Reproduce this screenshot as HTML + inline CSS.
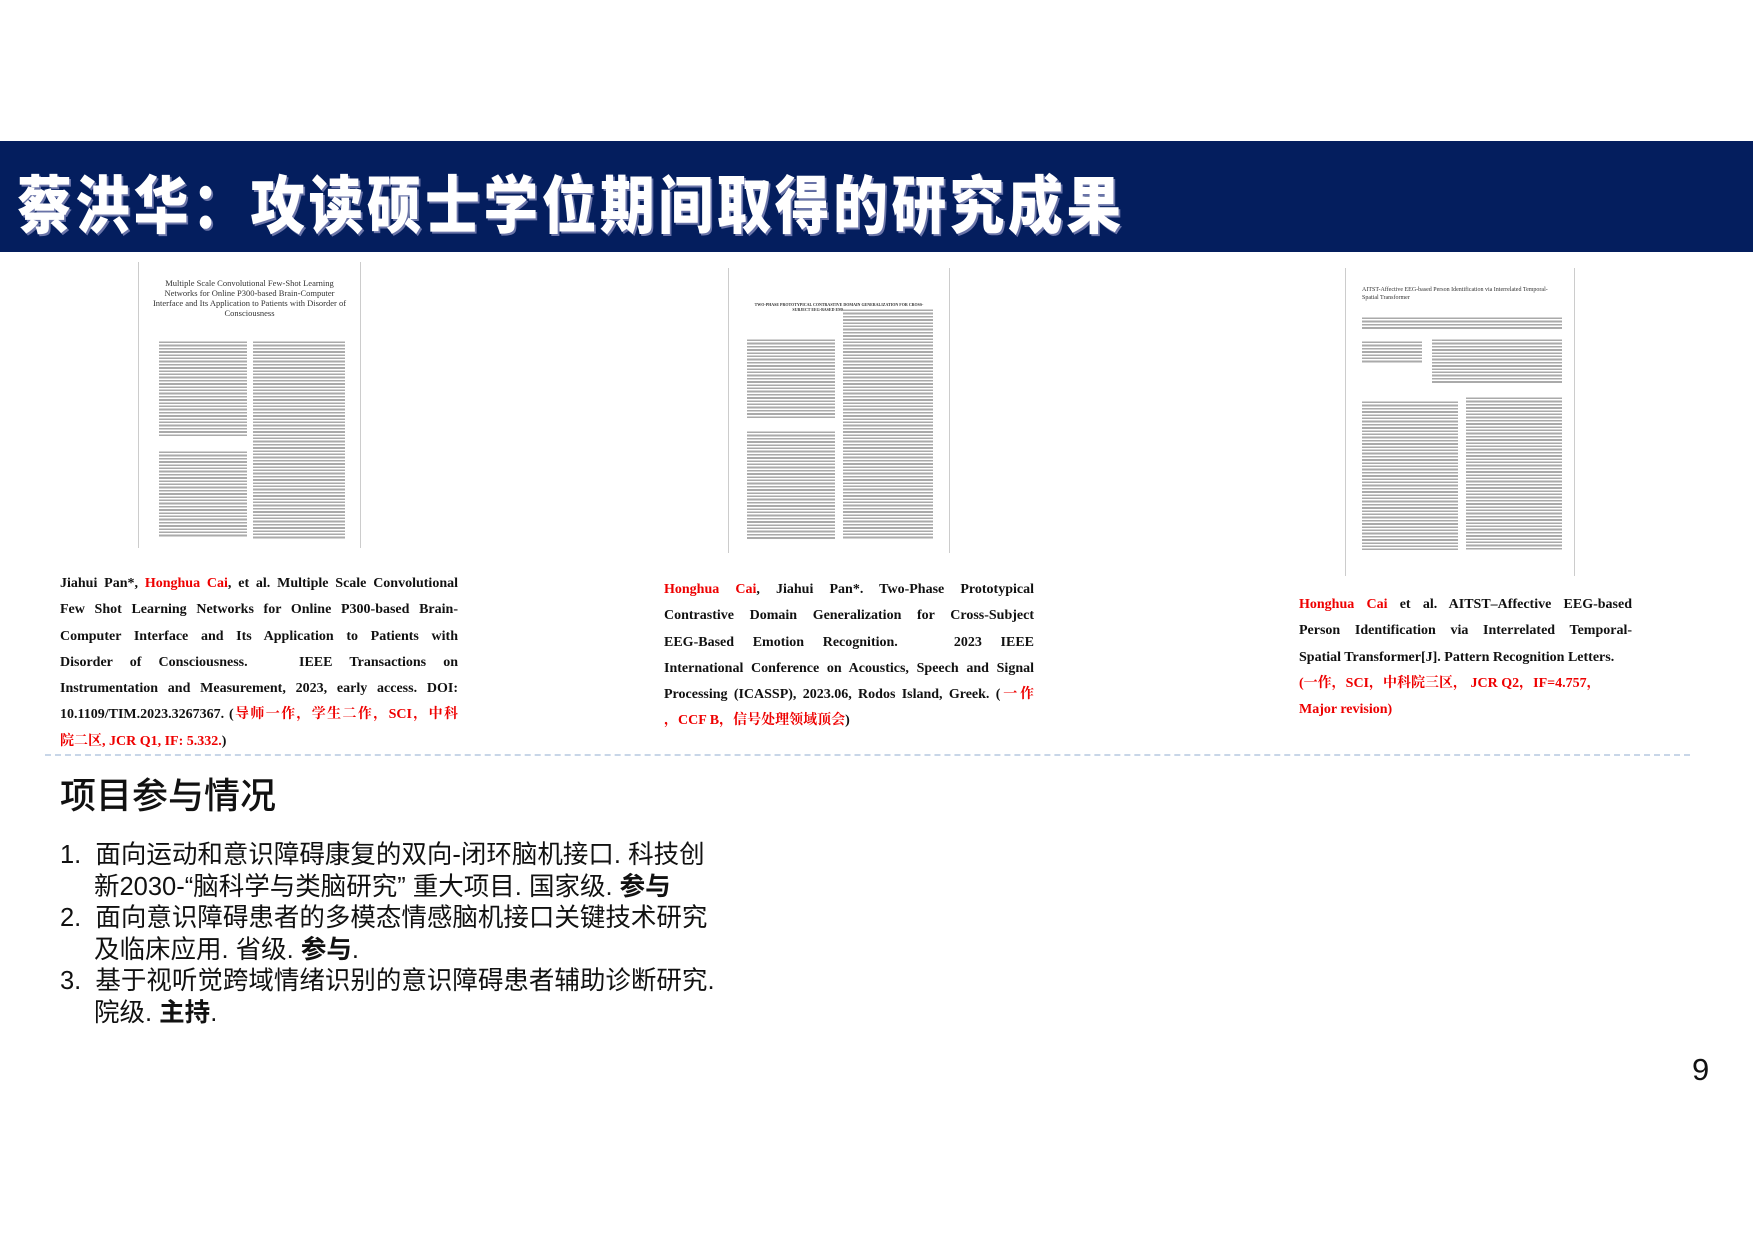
<!DOCTYPE html>
<html><head><meta charset="utf-8"><style>
*{margin:0;padding:0;box-sizing:border-box}
body{width:1753px;height:1238px;background:#fff;position:relative;overflow:hidden;font-family:"Liberation Sans","Noto Sans CJK SC",sans-serif}
.bar{position:absolute;left:0;top:141px;width:1753px;height:111px;background:#041e5e}
.title{position:absolute;left:17px;top:156px;font-size:63px;font-weight:900;color:#fff;letter-spacing:4px;white-space:nowrap;font-family:"Noto Sans CJK SC",sans-serif;text-shadow:2px 2px 0 #6a74a8;transform:scaleX(0.87);transform-origin:left top}
.paper{position:absolute;background:#fff;border-left:1px solid #ccc;border-right:1px solid #ccc;overflow:hidden}
.pt{font-family:"Liberation Serif",serif;color:#333;text-align:center}
.col{position:absolute;background:repeating-linear-gradient(#fff 0,#fff 1.5px,#aaa 1.5px,#aaa 3.2px)}
.cap{position:absolute;font-family:"Liberation Serif","Noto Serif CJK SC",serif;font-weight:bold;font-size:14px;line-height:26.3px;color:#111}
.cap div{text-align:justify;text-align-last:justify;white-space:nowrap}
.cap div.l{text-align-last:left}
.r{color:#e00}
.dash{position:absolute;left:45px;top:754px;width:1645px;border-top:2px dashed #c8d6e8}
.h2{position:absolute;left:60px;top:767px;font-size:36px;color:#111;font-family:"Noto Sans CJK SC",sans-serif;font-weight:500}
.list{position:absolute;left:60px;top:840px;font-size:25.5px;line-height:31.5px;color:#111;font-family:"Liberation Sans","Noto Sans CJK SC",sans-serif}
.li{padding-left:34px;text-indent:-34px}
.li b{font-weight:bold}
.pg{position:absolute;left:1692px;top:1052px;font-size:31px;color:#111}
</style></head><body>
<div class="bar"></div>
<div class="title">蔡洪华：攻读硕士学位期间取得的研究成果</div>

<div class="paper" style="left:138px;top:262px;width:223px;height:286px">
<div class="pt" style="font-size:8.5px;line-height:10px;margin:16px 12px 0">Multiple Scale Convolutional Few-Shot Learning Networks for Online P300-based Brain-Computer Interface and Its Application to Patients with Disorder of Consciousness</div>
<div class="col" style="left:20px;top:78px;width:88px;height:96px"></div>
<div class="col" style="left:20px;top:188px;width:88px;height:88px"></div>
<div class="col" style="left:114px;top:78px;width:92px;height:200px"></div>
</div>
<div class="paper" style="left:728px;top:268px;width:222px;height:285px">
<div class="pt" style="font-size:4px;line-height:5px;margin:34px 20px 0;font-weight:bold">TWO-PHASE PROTOTYPICAL CONTRASTIVE DOMAIN GENERALIZATION FOR CROSS-SUBJECT EEG-BASED EMOTION RECOGNITION</div>
<div class="col" style="left:18px;top:70px;width:88px;height:80px"></div>
<div class="col" style="left:18px;top:162px;width:88px;height:110px"></div>
<div class="col" style="left:114px;top:40px;width:90px;height:232px"></div>
</div>
<div class="paper" style="left:1345px;top:268px;width:230px;height:308px">
<div class="pt" style="font-size:6px;line-height:8px;margin:18px 16px 0;text-align:left">AITST-Affective EEG-based Person Identification via Interrelated Temporal-Spatial Transformer</div>
<div class="col" style="left:16px;top:48px;width:200px;height:14px"></div>
<div class="col" style="left:16px;top:72px;width:60px;height:24px"></div>
<div class="col" style="left:86px;top:70px;width:130px;height:46px"></div>
<div class="col" style="left:16px;top:132px;width:96px;height:150px"></div>
<div class="col" style="left:120px;top:128px;width:96px;height:154px"></div>
</div>

<div class="cap" style="left:60px;top:571px;width:398px">
<div>Jiahui Pan*, <span class="r">Honghua Cai</span>, et al. Multiple Scale Convolutional</div>
<div>Few Shot Learning Networks for Online P300-based Brain-</div>
<div>Computer Interface and Its Application to Patients with</div>
<div>Disorder of Consciousness. &nbsp; IEEE Transactions on</div>
<div>Instrumentation and Measurement, 2023, early access. DOI:</div>
<div>10.1109/TIM.2023.3267367. (<span class="r">导师一作，学生二作，SCI，中科</span></div>
<div class="l"><span class="r">院二区, JCR Q1, IF: 5.332.</span>)</div>
</div>
<div class="cap" style="left:664px;top:577px;width:370px">
<div><span class="r">Honghua Cai</span>, Jiahui Pan*. Two-Phase Prototypical</div>
<div>Contrastive Domain Generalization for Cross-Subject</div>
<div>EEG-Based Emotion Recognition. &nbsp; 2023 IEEE</div>
<div>International Conference on Acoustics, Speech and Signal</div>
<div>Processing (ICASSP), 2023.06, Rodos Island, Greek. (<span class="r">一作</span></div>
<div class="l"><span class="r">，CCF B，信号处理领域顶会</span>)</div>
</div>
<div class="cap" style="left:1299px;top:592px;width:333px">
<div><span class="r">Honghua Cai</span> et al. AITST–Affective EEG-based</div>
<div>Person Identification via Interrelated Temporal-</div>
<div class="l">Spatial Transformer[J]. Pattern Recognition Letters.</div>
<div class="l"><span class="r">(一作，SCI，中科院三区， JCR Q2，IF=4.757，</span></div>
<div class="l"><span class="r">Major revision)</span></div>
</div>

<div class="dash"></div>
<div class="h2">项目参与情况</div>
<div class="list">
<div class="li">1.&nbsp; 面向运动和意识障碍康复的双向-闭环脑机接口. 科技创<br>新2030-“脑科学与类脑研究” 重大项目. 国家级. <b>参与</b></div>
<div class="li">2.&nbsp; 面向意识障碍患者的多模态情感脑机接口关键技术研究<br>及临床应用. 省级. <b>参与</b>.</div>
<div class="li">3.&nbsp; 基于视听觉跨域情绪识别的意识障碍患者辅助诊断研究.<br>院级. <b>主持</b>.</div>
</div>
<div class="pg">9</div>
</body></html>
